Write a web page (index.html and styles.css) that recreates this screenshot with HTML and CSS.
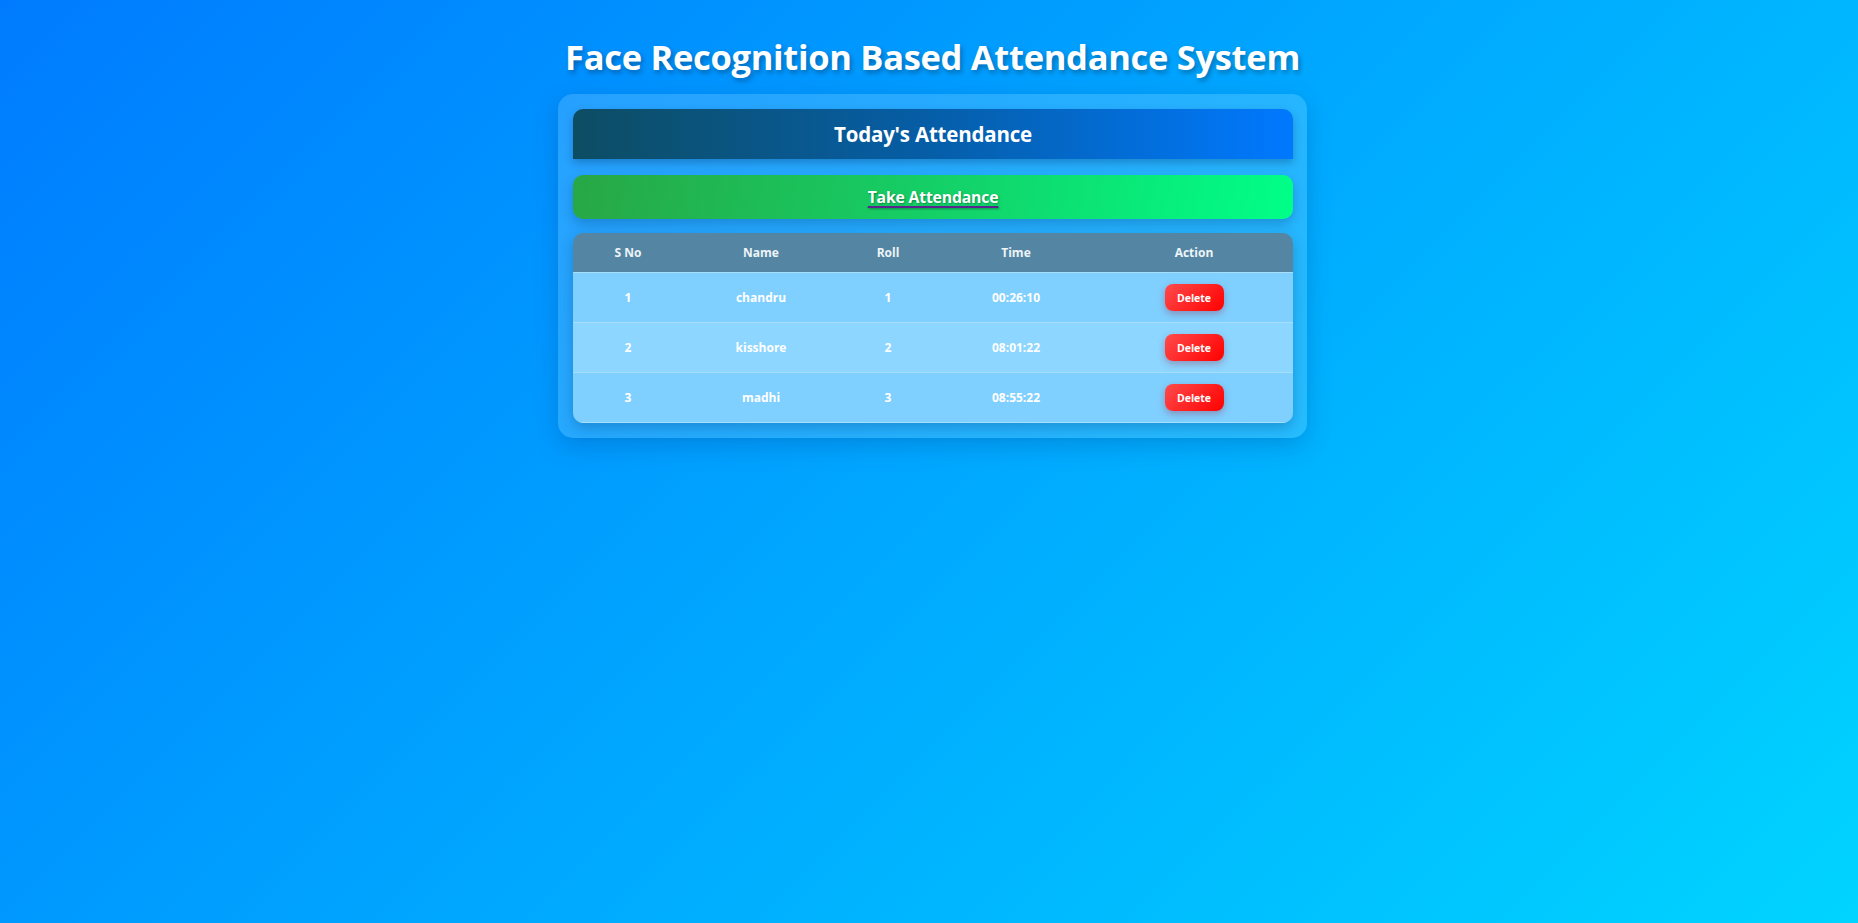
FILE: index.html
```html
<!DOCTYPE html>
<html lang="en">
<head>
<meta charset="utf-8">
<title>Face Recognition Based Attendance System</title>
<link rel="stylesheet" href="styles.css">
</head>
<body>
  <h1 class="page-title">Face Recognition Based Attendance System</h1>
  <main class="panel">
    <h2 class="panel-header">Today's Attendance</h2>
    <a class="take-btn" href="#">Take Attendance</a>
    <table class="att-table">
      <colgroup>
        <col class="c1"><col class="c2"><col class="c3"><col class="c4"><col class="c5">
      </colgroup>
      <thead>
        <tr><th>S No</th><th>Name</th><th>Roll</th><th>Time</th><th>Action</th></tr>
      </thead>
      <tbody>
        <tr><td>1</td><td>chandru</td><td>1</td><td>00:26:10</td><td><button class="del-btn">Delete</button></td></tr>
        <tr><td>2</td><td>kisshore</td><td>2</td><td>08:01:22</td><td><button class="del-btn">Delete</button></td></tr>
        <tr><td>3</td><td>madhi</td><td>3</td><td>08:55:22</td><td><button class="del-btn">Delete</button></td></tr>
      </tbody>
    </table>
  </main>
</body>
</html>
```
FILE: styles.css
```css
* { box-sizing: border-box; }
html, body { height: 100%; }
body {
  margin: 0;
  padding: 34px 0 0 7px;
  min-height: 100%;
  font-family: "Open Sans", "Noto Sans", sans-serif;
  color: #fff;
  background: linear-gradient(135deg, #007bff 0%, #00d4ff 100%);
  background-attachment: fixed;
}
.page-title {
  margin: 0 0 14px;
  text-align: center;
  font-size: 34.5px;
  line-height: 46px;
  font-weight: 700;
  letter-spacing: -0.3px;
  color: #fff;
  text-shadow: 2px 3px 5px rgba(0, 0, 0, 0.3);
}
.panel {
  width: 749px;
  margin: 0 auto;
  padding: 15px 14px 15px 15px;
  border-radius: 15px;
  background: rgba(255, 255, 255, 0.15);
  box-shadow: 0 8px 24px rgba(0, 60, 140, 0.25);
}
.panel-header {
  margin: 0;
  height: 50px;
  display: flex;
  align-items: center;
  justify-content: center;
  font-size: 20.5px;
  font-weight: 700;
  letter-spacing: -0.2px;
  border-radius: 10px 10px 0 0;
  background: linear-gradient(90deg, #0d4d63 0%, #065ea8 50%, #0079ff 100%);
  box-shadow: 0 4px 8px rgba(0, 40, 90, 0.3);
}
.take-btn {
  display: flex;
  align-items: center;
  justify-content: center;
  height: 44px;
  margin-top: 16px;
  border-radius: 10px;
  background: linear-gradient(100deg, #28a745 0%, #12d46a 55%, #00ff88 100%);
  color: #fff;
  font-size: 15.8px;
  font-weight: 700;
  letter-spacing: -0.2px;
  text-decoration: underline;
  text-decoration-color: #5b2590;
  text-decoration-thickness: 2px;
  text-underline-offset: 3px;
  text-shadow: 1px 1px 2px rgba(0, 0, 0, 0.35);
  box-shadow: 0 5px 12px rgba(0, 60, 120, 0.3);
}
.att-table {
  width: 720px;
  margin-top: 14px;
  border-collapse: separate;
  border-spacing: 0;
  table-layout: fixed;
  border-radius: 10px;
  overflow: hidden;
  box-shadow: 0 5px 14px rgba(0, 60, 120, 0.3);
}
.c1 { width: 110px; }
.c2 { width: 156px; }
.c3 { width: 98px; }
.c4 { width: 158px; }
.c5 { width: 198px; }
.att-table th, .att-table td {
  text-align: center;
  font-size: 12px;
  font-weight: 700;
  color: #fff;
  padding: 0;
}
.att-table th {
  height: 40px;
  background: #5486a3;
  color: #eef4f8;
  border-bottom: 1px solid #a6defc;
}
.att-table td {
  height: 50px;
  border-bottom: 1px solid #a6defc;
}
.att-table tbody tr:nth-child(odd) td { background: #7fd0ff; }
.att-table tbody tr:nth-child(even) td { background: #8cd6ff; }
.del-btn {
  font-family: "Open Sans", "Noto Sans", sans-serif;
  font-size: 10.5px;
  font-weight: 700;
  color: #fff;
  width: 59px;
  height: 27px;
  padding: 0;
  border: none;
  border-radius: 8px;
  background: linear-gradient(135deg, #ff4b4b 0%, #ff0000 100%);
  box-shadow: 0 3px 7px rgba(150, 30, 60, 0.35);
  cursor: pointer;
}
```
